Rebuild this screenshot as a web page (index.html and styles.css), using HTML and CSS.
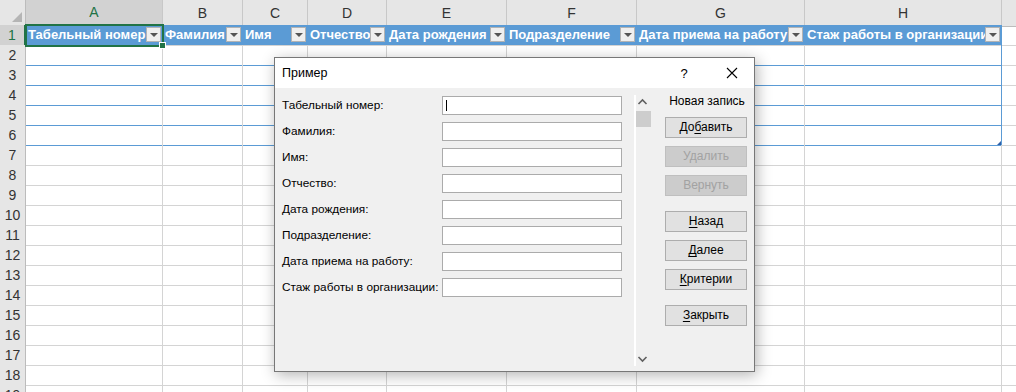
FILE: index.html
```html
<!DOCTYPE html>
<html lang="ru">
<head>
<meta charset="utf-8">
<title>Пример</title>
<link rel="stylesheet" href="styles.css">
</head>
<body>
<div class="sheet">
  <div class="row head">
    <div class="corner"><span class="tri"></span></div>
    <div class="ch sel">A</div><div class="ch">B</div><div class="ch">C</div><div class="ch">D</div><div class="ch">E</div><div class="ch">F</div><div class="ch">G</div><div class="ch">H</div><div class="ch"></div>
  </div>
  <div class="row">
    <div class="rh sel">1</div>
    <div class="c th"><span class="t">Табельный номер</span><span class="dd"></span><span class="selbox"><span class="handle"></span></span></div>
    <div class="c th"><span class="t">Фамилия</span><span class="dd"></span></div>
    <div class="c th"><span class="t">Имя</span><span class="dd"></span></div>
    <div class="c th"><span class="t">Отчество</span><span class="dd"></span></div>
    <div class="c th"><span class="t">Дата рождения</span><span class="dd"></span></div>
    <div class="c th"><span class="t">Подразделение</span><span class="dd"></span></div>
    <div class="c th"><span class="t">Дата приема на работу</span><span class="dd"></span></div>
    <div class="c th last"><span class="t">Стаж работы в организации</span><span class="dd"></span></div>
    <div class="c"></div>
  </div>
  <div class="row tb"><div class="rh">2</div><div class="c"></div><div class="c"></div><div class="c"></div><div class="c"></div><div class="c"></div><div class="c"></div><div class="c"></div><div class="c last"></div><div class="c out"></div></div>
  <div class="row tb"><div class="rh">3</div><div class="c"></div><div class="c"></div><div class="c"></div><div class="c"></div><div class="c"></div><div class="c"></div><div class="c"></div><div class="c last"></div><div class="c out"></div></div>
  <div class="row tb"><div class="rh">4</div><div class="c"></div><div class="c"></div><div class="c"></div><div class="c"></div><div class="c"></div><div class="c"></div><div class="c"></div><div class="c last"></div><div class="c out"></div></div>
  <div class="row tb"><div class="rh">5</div><div class="c"></div><div class="c"></div><div class="c"></div><div class="c"></div><div class="c"></div><div class="c"></div><div class="c"></div><div class="c last"></div><div class="c out"></div></div>
  <div class="row tb"><div class="rh">6</div><div class="c"></div><div class="c"></div><div class="c"></div><div class="c"></div><div class="c"></div><div class="c"></div><div class="c"></div><div class="c last"><span class="resize"></span></div><div class="c out"></div></div>
  <div class="row"><div class="rh">7</div><div class="c"></div><div class="c"></div><div class="c"></div><div class="c"></div><div class="c"></div><div class="c"></div><div class="c"></div><div class="c"></div><div class="c"></div></div>
  <div class="row"><div class="rh">8</div><div class="c"></div><div class="c"></div><div class="c"></div><div class="c"></div><div class="c"></div><div class="c"></div><div class="c"></div><div class="c"></div><div class="c"></div></div>
  <div class="row"><div class="rh">9</div><div class="c"></div><div class="c"></div><div class="c"></div><div class="c"></div><div class="c"></div><div class="c"></div><div class="c"></div><div class="c"></div><div class="c"></div></div>
  <div class="row"><div class="rh">10</div><div class="c"></div><div class="c"></div><div class="c"></div><div class="c"></div><div class="c"></div><div class="c"></div><div class="c"></div><div class="c"></div><div class="c"></div></div>
  <div class="row"><div class="rh">11</div><div class="c"></div><div class="c"></div><div class="c"></div><div class="c"></div><div class="c"></div><div class="c"></div><div class="c"></div><div class="c"></div><div class="c"></div></div>
  <div class="row"><div class="rh">12</div><div class="c"></div><div class="c"></div><div class="c"></div><div class="c"></div><div class="c"></div><div class="c"></div><div class="c"></div><div class="c"></div><div class="c"></div></div>
  <div class="row"><div class="rh">13</div><div class="c"></div><div class="c"></div><div class="c"></div><div class="c"></div><div class="c"></div><div class="c"></div><div class="c"></div><div class="c"></div><div class="c"></div></div>
  <div class="row"><div class="rh">14</div><div class="c"></div><div class="c"></div><div class="c"></div><div class="c"></div><div class="c"></div><div class="c"></div><div class="c"></div><div class="c"></div><div class="c"></div></div>
  <div class="row"><div class="rh">15</div><div class="c"></div><div class="c"></div><div class="c"></div><div class="c"></div><div class="c"></div><div class="c"></div><div class="c"></div><div class="c"></div><div class="c"></div></div>
  <div class="row"><div class="rh">16</div><div class="c"></div><div class="c"></div><div class="c"></div><div class="c"></div><div class="c"></div><div class="c"></div><div class="c"></div><div class="c"></div><div class="c"></div></div>
  <div class="row"><div class="rh">17</div><div class="c"></div><div class="c"></div><div class="c"></div><div class="c"></div><div class="c"></div><div class="c"></div><div class="c"></div><div class="c"></div><div class="c"></div></div>
  <div class="row"><div class="rh">18</div><div class="c"></div><div class="c"></div><div class="c"></div><div class="c"></div><div class="c"></div><div class="c"></div><div class="c"></div><div class="c"></div><div class="c"></div></div>
  <div class="row"><div class="rh">19</div><div class="c"></div><div class="c"></div><div class="c"></div><div class="c"></div><div class="c"></div><div class="c"></div><div class="c"></div><div class="c"></div><div class="c"></div></div>
</div>

<div class="dialog">
  <div class="titlebar">
    <span class="title">Пример</span>
    <span class="help">?</span>
    <span class="close"><svg width="12" height="12" viewBox="0 0 12 12"><path d="M1 1 L11 11 M11 1 L1 11" stroke="#000" stroke-width="1.1" fill="none"/></svg></span>
  </div>
  <div class="dbody">
    <div class="form">
      <div class="field"><span class="lbl">Табельный номер:</span><span class="inp"><span class="caret"></span></span></div>
      <div class="field"><span class="lbl">Фамилия:</span><span class="inp"></span></div>
      <div class="field"><span class="lbl">Имя:</span><span class="inp"></span></div>
      <div class="field"><span class="lbl">Отчество:</span><span class="inp"></span></div>
      <div class="field"><span class="lbl">Дата рождения:</span><span class="inp"></span></div>
      <div class="field"><span class="lbl">Подразделение:</span><span class="inp"></span></div>
      <div class="field"><span class="lbl">Дата приема на работу:</span><span class="inp"></span></div>
      <div class="field"><span class="lbl">Стаж работы в организации:</span><span class="inp"></span></div>
    </div>
    <div class="vscroll">
      <svg class="arr" width="17" height="14" viewBox="0 0 17 14"><path d="M4.5 9 L8.5 5 L12.5 9" stroke="#606060" stroke-width="1.6" fill="none"/></svg>
      <div class="thumb"></div>
      <div class="track"></div>
      <svg class="arr" width="17" height="14" viewBox="0 0 17 14"><path d="M4.5 5 L8.5 9 L12.5 5" stroke="#606060" stroke-width="1.6" fill="none"/></svg>
    </div>
    <div class="actions">
      <div class="newrec">Новая запись</div>
      <div class="btn">До<u>б</u>авить</div>
      <div class="btn dis">Удалить</div>
      <div class="btn dis">Вернуть</div>
      <div class="btn grp"><u>Н</u>азад</div>
      <div class="btn"><u>Д</u>алее</div>
      <div class="btn"><u>К</u>ритерии</div>
      <div class="btn grp"><u>З</u>акрыть</div>
    </div>
  </div>
</div>
</body>
</html>
```

FILE: styles.css
```css
html, body {
  margin: 0;
  padding: 0;
}
body {
  width: 1016px;
  height: 392px;
  overflow: hidden;
  position: relative;
  background: #ffffff;
  font-family: "Liberation Sans", Arial, sans-serif;
}

/* ---------- spreadsheet ---------- */
.sheet {
  display: flex;
  flex-direction: column;
  width: 1016px;
  overflow: hidden;
}
.row {
  display: grid;
  grid-template-columns: 26px 137px 80px 65px 79px 120px 130px 168px 197px 80px;
  height: 20px;
}
.row.head {
  height: 25px;
}
.row > div {
  box-sizing: border-box;
  border-right: 1px solid #d4d4d4;
  border-bottom: 1px solid #d4d4d4;
  position: relative;
}
.corner {
  background: #e6e6e6;
  border-right-color: #bcbcbc !important;
  border-bottom-color: #bcbcbc !important;
}
.corner .tri {
  position: absolute;
  right: 3px;
  bottom: 4px;
  width: 0;
  height: 0;
  border-left: 10px solid transparent;
  border-bottom: 10px solid #b5b5b5;
}
.ch {
  background: #e6e6e6;
  border-right-color: #c8c8c8 !important;
  border-bottom-color: #bcbcbc !important;
  text-align: center;
  font-size: 14px;
  line-height: 26px;
  color: #333;
}
.ch.sel {
  background: #d2d2d2;
  color: #217346;
  border-bottom: 2px solid #217346 !important;
  line-height: 25px;
}
.rh {
  background: #e6e6e6;
  border-right-color: #bcbcbc !important;
  border-bottom-color: #d0d0d0 !important;
  text-align: center;
  font-size: 14px;
  line-height: 20px;
  color: #333;
}
.rh.sel {
  background: #d2d2d2;
  color: #217346;
  border-right: 2px solid #217346 !important;
}

/* table header */
.th {
  background: #5b9bd5;
  border-right-color: #5b9bd5 !important;
  color: #ffffff;
  font-weight: bold;
  font-size: 13px;
  line-height: 19px;
  white-space: nowrap;
}
.th .t {
  display: block;
  padding-left: 2px;
  overflow: hidden;
}
.dd {
  position: absolute;
  right: 1px;
  top: 2px;
  width: 15px;
  height: 15px;
  box-sizing: border-box;
  background: #efefef;
  border: 1px solid #b3b3b3;
}
.dd::after {
  content: "";
  position: absolute;
  left: 3px;
  top: 5px;
  border-left: 4px solid transparent;
  border-right: 4px solid transparent;
  border-top: 4px solid #555;
}
.selbox {
  position: absolute;
  left: -1px;
  top: -1px;
  right: -2px;
  bottom: -2px;
  border: 2px solid #217346;
  z-index: 2;
}
.handle {
  position: absolute;
  right: -4px;
  bottom: -4px;
  width: 5px;
  height: 5px;
  background: #217346;
  border: 1px solid #ffffff;
}

/* table body */
.tb > .c {
  border-bottom-color: #5b9bd5;
}
.tb > .c.out {
  border-bottom-color: #d4d4d4;
}
.c.last {
  border-right-color: #5b9bd5 !important;
}
.resize {
  position: absolute;
  right: 0;
  bottom: 0;
  width: 0;
  height: 0;
  border-left: 4px solid transparent;
  border-bottom: 4px solid #2f5fa8;
}

/* ---------- dialog ---------- */
.dialog {
  position: absolute;
  left: 274px;
  top: 57px;
  width: 481px;
  height: 315px;
  box-sizing: border-box;
  border: 1px solid #777777;
  background: #f0f0f0;
  box-shadow: 2px 3px 14px rgba(0, 0, 0, 0.3);
  display: flex;
  flex-direction: column;
  font-size: 12px;
  color: #000;
  z-index: 5;
}
.titlebar {
  height: 30px;
  background: #ffffff;
  display: flex;
  align-items: center;
  padding-left: 7px;
}
.title {
  flex: 1;
  font-size: 12.5px;
}
.help {
  width: 16px;
  text-align: center;
  font-size: 13px;
  margin-right: 34px;
}
.close {
  width: 12px;
  height: 12px;
  display: flex;
  margin-right: 16px;
}
.dbody {
  flex: 1;
  display: flex;
  align-items: flex-start;
}
.form {
  padding: 8px 0 0 7px;
  display: flex;
  flex-direction: column;
  gap: 7px;
}
.field {
  display: flex;
  align-items: center;
  height: 19px;
}
.lbl {
  width: 160px;
  white-space: nowrap;
  font-size: 11.8px;
  line-height: 14px;
  padding-bottom: 2px;
}
.inp {
  width: 180px;
  height: 19px;
  box-sizing: border-box;
  border: 1px solid #ababab;
  background: #ffffff;
  position: relative;
}
.caret {
  position: absolute;
  left: 3px;
  top: 3px;
  width: 1px;
  height: 11px;
  background: #000;
}
.vscroll {
  margin: 7px 0 0 12px;
  width: 17px;
  height: 271px;
  box-sizing: border-box;
  border-left: 2px solid #ffffff;
  display: flex;
  flex-direction: column;
}
.vscroll .arr {
  display: block;
  margin-left: -2px;
  flex: none;
}
.thumb {
  margin-top: 2px;
  width: 15px;
  height: 16px;
  background: #cdcdcd;
}
.track {
  flex: 1;
}
.actions {
  margin-left: 14px;
  width: 82px;
  padding-top: 6px;
  display: flex;
  flex-direction: column;
}
.newrec {
  text-align: center;
  line-height: 14px;
  margin-bottom: 9px;
  margin-left: 2px;
}
.btn {
  height: 21px;
  box-sizing: border-box;
  border: 1px solid #adadad;
  background: #e1e1e1;
  text-align: center;
  line-height: 18px;
  margin-bottom: 8px;
}
.btn u {
  text-decoration: underline;
  text-underline-offset: 2px;
}
.btn.dis {
  background: #cccccc;
  border-color: #bfbfbf;
  color: #a2a2a2;
}
.btn.grp {
  margin-top: 7px;
}
```
